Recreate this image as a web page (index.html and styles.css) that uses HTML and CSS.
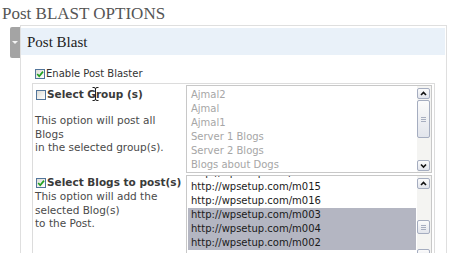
FILE: index.html
```html
<!DOCTYPE html>
<html lang="en">

<head>
    <meta charset="UTF-8">
    <title>Post BLAST OPTIONS</title>
    <link rel="stylesheet" href="styles.css">
</head>

<body>
    <h1 class="page-title">Post BLAST OPTIONS</h1>

    <div class="postbox">
        <div class="handle"><span class="arrow"></span></div>
        <div class="box">
            <h3 class="box-head">Post Blast</h3>
            <div class="inside">
                <label class="enable">
                    <span class="cb checked"><svg viewBox="0 0 8 8" width="8" height="8"><polyline points="1.2,4 3.2,6.2 7,1.6" /></svg></span>Enable Post Blaster
                </label>

                <div class="form-table">
                    <!-- groups -->
                    <div class="opt-row">
                        <div class="label-cell first">
                            <div class="opt-label">
                                <span class="cb"></span>
                                <span class="opt-name">Select Group (s)
                                    <svg class="ibeam" viewBox="0 0 7 14" width="7" height="14"><path d="M0.5 0.5H2Q3.5 0.5 3.5 2V12Q3.5 13.5 2 13.5H0.5M6.5 0.5H5Q3.5 0.5 3.5 2M3.5 12Q3.5 13.5 5 13.5H6.5" /></svg>
                                </span>
                            </div>
                            <p class="desc first">This option will post all Blogs<br>in the selected group(s).</p>
                        </div>
                        <div class="list-cell">
                            <div class="listbox disabled">
                                <ul class="options">
                                    <li>Ajmal2</li>
                                    <li>Ajmal</li>
                                    <li>Ajmal1</li>
                                    <li>Server 1 Blogs</li>
                                    <li>Server 2 Blogs</li>
                                    <li>Blogs about Dogs</li>
                                    <li>Blogs about Cats</li>
                                </ul>
                                <div class="scrollbar">
                                    <span class="sb-btn"><svg viewBox="0 0 11 9" width="11" height="9"><polyline points="3,6 5.5,3.5 8,6" /></svg></span>
                                    <span class="sb-thumb tall"><i></i><i></i><i></i></span>
                                    <span class="sb-btn down"><svg viewBox="0 0 11 9" width="11" height="9"><polyline points="3,3.5 5.5,6 8,3.5" /></svg></span>
                                </div>
                            </div>
                        </div>
                    </div>

                    <!-- blogs -->
                    <div class="opt-row">
                        <div class="label-cell second">
                            <div class="opt-label">
                                <span class="cb checked"><svg viewBox="0 0 8 8" width="8" height="8"><polyline points="1.2,4 3.2,6.2 7,1.6" /></svg></span>
                                <span class="opt-name">Select Blogs to post(s)</span>
                            </div>
                            <p class="desc">This option will add the selected Blog(s)<br>to the Post.</p>
                        </div>
                        <div class="list-cell">
                            <div class="listbox tall-box">
                                <ul class="options scrolled">
                                    <li>http://wpsetup.com/m014</li>
                                    <li>http://wpsetup.com/m015</li>
                                    <li>http://wpsetup.com/m016</li>
                                    <li class="selected">http://wpsetup.com/m003</li>
                                    <li class="selected">http://wpsetup.com/m004</li>
                                    <li class="selected">http://wpsetup.com/m002</li>
                                </ul>
                                <div class="scrollbar">
                                    <span class="sb-btn"><svg viewBox="0 0 11 9" width="11" height="9"><polyline points="3,6 5.5,3.5 8,6" /></svg></span>
                                    <span class="sb-thumb short"><i></i><i></i><i></i></span>
                                    <span class="sb-btn down"><svg viewBox="0 0 11 9" width="11" height="9"><polyline points="3,3.5 5.5,6 8,3.5" /></svg></span>
                                </div>
                            </div>
                        </div>
                    </div>
                </div>
            </div>
        </div>
    </div>
</body>

</html>
```

FILE: styles.css
```css
body {
    margin: 0;
    background-color: #ffffff;
    font-family: "DejaVu Sans", Verdana, sans-serif;
    font-size: 10px;
    color: #333;
    overflow: hidden;
    height: 253px;
}

.page-title {
    margin: 0;
    padding: 4px 0 1px 2px;
    font-family: "Liberation Serif", "Times New Roman", serif;
    font-size: 17px;
    font-weight: normal;
    line-height: 20px;
    color: #555;
}

/* panel */
.postbox {
    display: grid;
    grid-template-columns: 10px 427px;
    margin-left: 10px;
}

.handle {
    margin-top: 2px;
    height: 31px;
    background-color: #a4a4a4;
    border-radius: 2px 0 0 2px;
    display: flex;
    align-items: center;
    justify-content: center;
}

.handle .arrow {
    width: 0;
    height: 0;
    border-left: 3px solid transparent;
    border-right: 3px solid transparent;
    border-top: 3px solid #f4f4f4;
}

.box {
    border: 1px solid #dfdfdf;
    border-bottom: none;
    height: 240px;
}

.box-head {
    margin: 2px 1px 0 0;
    height: 26px;
    padding: 1px 6px 0;
    background-color: #e9f1f9;
    font-family: "Liberation Serif", "Times New Roman", serif;
    font-size: 15px;
    font-weight: normal;
    line-height: 26px;
    color: #222;
}

/* checkboxes */
.cb {
    box-sizing: border-box;
    width: 10px;
    height: 10px;
    flex: none;
    border: 1px solid #52759a;
    background: linear-gradient(135deg, #dcdcd6, #ffffff);
    display: flex;
    align-items: center;
    justify-content: center;
}

.cb svg polyline {
    fill: none;
    stroke: #21a121;
    stroke-width: 1.7;
}

.enable {
    display: flex;
    align-items: center;
    gap: 1px;
    margin: 12px 0 0 14px;
    line-height: 13px;
    color: #333;
}

/* options table */
.form-table {
    width: 401px;
    margin: 3px 10px 0 11px;
    border: 1px solid #dcdcdc;
    border-bottom: none;
}

.opt-row {
    display: grid;
    grid-template-columns: 153px 246px;
    padding: 1px 0;
}

.label-cell {
    padding-left: 2px;
}

.label-cell.first {
    padding-top: 3px;
}

.label-cell.second {
    padding-top: 1px;
}

.opt-label {
    display: flex;
    align-items: center;
    gap: 1px;
    padding-left: 1px;
    line-height: 13px;
}

.opt-name {
    position: relative;
    font-size: 10.5px;
    font-weight: bold;
    color: #3a3a3a;
}

.ibeam {
    position: absolute;
    left: 45px;
    top: -1px;
}

.ibeam path {
    fill: none;
    stroke: #222;
    stroke-width: 1;
}

.desc {
    margin: 1px 0 0;
    font-size: 10.5px;
    line-height: 13.5px;
    color: #4a4a4a;
}

.desc.first {
    margin-top: 13px;
}

/* list boxes */
.listbox {
    box-sizing: border-box;
    width: 246px;
    height: 88px;
    border: 1px solid #c8c8c8;
    display: flex;
    overflow: hidden;
}

.listbox.tall-box {
    height: 87px;
}

.options {
    flex: 1;
    list-style: none;
    margin: 0;
    padding: 2px 0 0;
    line-height: 14px;
    color: #1a1a1a;
    overflow: hidden;
}

.options li {
    margin: 0 1px;
    padding-left: 3px;
    white-space: nowrap;
}

.options.scrolled li:first-child {
    margin-top: -12px;
}

.options li.selected {
    background-color: #b4b6c2;
}

.disabled .options {
    color: #a6a6a6;
}

.scrollbar {
    width: 14px;
    box-sizing: border-box;
    padding: 2px 1px 1px 0;
    background-color: #f4f4f2;
    display: flex;
    flex-direction: column;
}

.sb-btn,
.sb-thumb {
    box-sizing: border-box;
    width: 13px;
    border: 1px solid #a5adc0;
    border-radius: 2px;
    background: linear-gradient(#fbfbfb, #e2e5ec);
    display: flex;
    align-items: center;
    justify-content: center;
}

.sb-btn {
    height: 11px;
}

.sb-btn.down {
    margin-top: auto;
}

.sb-btn svg polyline {
    fill: none;
    stroke: #111;
    stroke-width: 1.6;
}

.sb-thumb {
    flex-direction: column;
    gap: 1px;
}

.sb-thumb.tall {
    margin-top: 1px;
    height: 38px;
}

.sb-thumb.short {
    margin-top: 31px;
    height: 14px;
}

.sb-thumb i {
    display: block;
    width: 5px;
    height: 1px;
    background-color: #a7aec0;
}
```
